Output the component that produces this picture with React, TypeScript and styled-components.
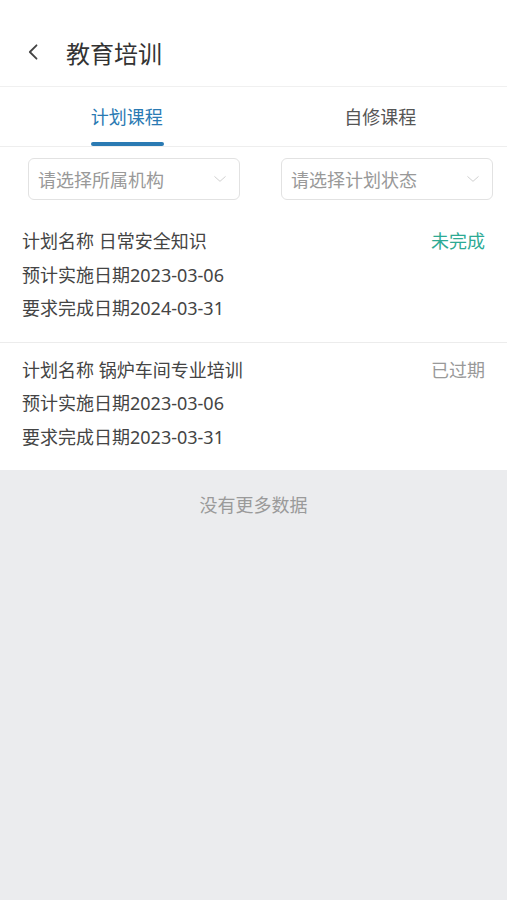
import React, {useState} from 'react';
import styled, {createGlobalStyle} from 'styled-components';

const GlobalStyle = createGlobalStyle`
    html, body {
        margin: 0;
        padding: 0;
        background: #ebecee;
    }
    body {
        font-family: "Noto Sans", "Noto Sans CJK SC", sans-serif;
    }
    * {
        box-sizing: border-box;
    }
`;

type PlanT = {
    name:string;
    startDate:string;
    dueDate:string;
    status:'pending' | 'expired';
};

const plans:PlanT[] = [
    {name: '日常安全知识', startDate: '2023-03-06', dueDate: '2024-03-31', status: 'pending'},
    {name: '锅炉车间专业培训', startDate: '2023-03-06', dueDate: '2023-03-31', status: 'expired'},
];

const statusText = {pending: '未完成', expired: '已过期'};

const Page = styled.div`
    min-height: 900px;
    background: #ebecee;
    display: flex;
    flex-direction: column;
`;

const Header = styled.header`
    height: 87px;
    padding: 18px 0 0 24px;
    display: flex;
    align-items: center;
    gap: 22px;
    background: #fff;
    border-bottom: 1px solid #f0f0f0;
`;

const BackBtn = styled.button`
    width: 20px;
    height: 24px;
    padding: 0;
    border: none;
    background: none;
    display: flex;
    align-items: center;
    justify-content: center;
`;

const Title = styled.h1`
    margin: 0;
    font-size: 24px;
    font-weight: 400;
    color: #333;
    letter-spacing: 0;
`;

const Tabs = styled.nav`
    height: 60px;
    display: grid;
    grid-template-columns: 1fr 1fr;
    background: #fff;
    border-bottom: 1px solid #eeeeee;
`;

const Tab = styled.div<{$active?:boolean}>`
    position: relative;
    display: flex;
    align-items: center;
    justify-content: center;
    padding-bottom: 2px;
    font-size: 18px;
    color: ${(p) => p.$active ? '#2a7ab3' : '#555'};

    &::after {
        content: '';
        display: ${(p) => p.$active ? 'block' : 'none'};
        position: absolute;
        bottom: 0;
        left: 50%;
        width: 73px;
        height: 4px;
        margin-left: -36px;
        border-radius: 2px;
        background: #2a7ab3;
    }
`;

const Filters = styled.div`
    display: grid;
    grid-template-columns: 1fr 1fr;
    gap: 41px;
    padding: 11px 14px 14px 28px;
    background: #fff;
`;

const Select = styled.div`
    height: 42px;
    padding: 0 12px 0 9px;
    display: flex;
    align-items: center;
    justify-content: space-between;
    border: 1px solid #e2e2e2;
    border-radius: 6px;
    font-size: 18px;
    color: #999;
`;

const List = styled.div`
    background: #fff;
`;

const Card = styled.div`
    padding: 11px 22px 16px 22px;
    display: flex;
    justify-content: space-between;

    &:not(:first-child) {
        border-top: 1px solid #ececec;
    }
`;

const Info = styled.div`
    display: flex;
    flex-direction: column;
`;

const Line = styled.div`
    font-size: 18px;
    line-height: 33.5px;
    color: #444;
    white-space: pre;
`;

const Status = styled.div<{$status:PlanT['status']}>`
    font-size: 18px;
    line-height: 33.5px;
    color: ${(p) => p.$status === 'pending' ? '#2daa94' : '#999'};
`;

const NoMore = styled.div`
    padding-top: 21px;
    text-align: center;
    font-size: 18px;
    color: #9a9a9a;
`;

const Chevron = ({size = 14, color = '#ccc', dir = 'down'}:{size?:number; color?:string; dir?:'down' | 'left'}) => (
    <svg width={size} height={size} viewBox="0 0 24 24" fill="none" stroke={color} strokeWidth={dir === 'left' ? 2.2 : 1.6}
        strokeLinecap="round" strokeLinejoin="round">
        {dir === 'left'
            ? <polyline points="15 4 7 12 15 20"/>
            : <polyline points="3 8 12 16 21 8"/>}
    </svg>
);

export default function App() {
    const [tab, setTab] = useState(0);

    return (
        <Page>
            <GlobalStyle/>
            <Header>
                <BackBtn><Chevron size={22} color="#444" dir="left"/></BackBtn>
                <Title>教育培训</Title>
            </Header>
            <Tabs>
                {['计划课程', '自修课程'].map((name, i) => (
                    <Tab key={name} $active={tab === i} onClick={() => setTab(i)}>{name}</Tab>
                ))}
            </Tabs>
            <Filters>
                <Select>请选择所属机构<Chevron/></Select>
                <Select>请选择计划状态<Chevron/></Select>
            </Filters>
            <List>
                {plans.map((plan) => (
                    <Card key={plan.name}>
                        <Info>
                            <Line>{`计划名称 ${plan.name}`}</Line>
                            <Line>预计实施日期{plan.startDate}</Line>
                            <Line>要求完成日期{plan.dueDate}</Line>
                        </Info>
                        <Status $status={plan.status}>{statusText[plan.status]}</Status>
                    </Card>
                ))}
            </List>
            <NoMore>没有更多数据</NoMore>
        </Page>
    );
}
